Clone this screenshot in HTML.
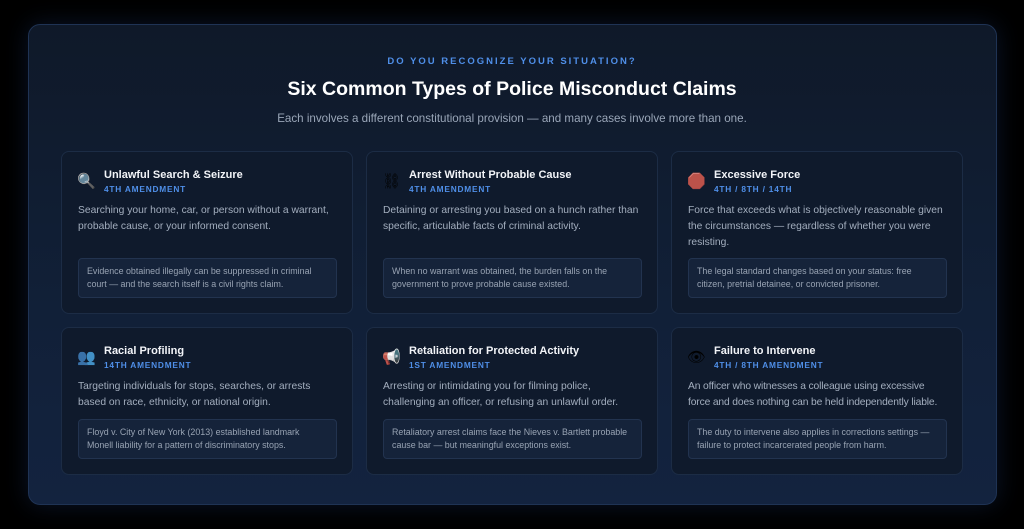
<!DOCTYPE html><html><head><meta charset="utf-8"><style>
*{box-sizing:border-box;margin:0;padding:0}
body{width:1024px;height:529px;background:#000;font-family:"Liberation Sans",sans-serif;overflow:hidden;position:relative}
.panel{position:absolute;left:28px;top:24px;width:969px;height:481px;border:1px solid #1f3354;border-radius:12px;background:linear-gradient(180deg,#0f1929 0%,#112038 60%,#13233f 100%);box-shadow:0 0 24px rgba(40,80,160,0.25)}
.eyebrow{position:absolute;top:56px;left:0;width:1024px;text-align:center;color:#4f8fe8;font-size:9.5px;font-weight:bold;letter-spacing:2px}
h1{position:absolute;top:78px;left:0;width:1024px;text-align:center;color:#fff;font-size:19.5px;font-weight:bold}
.sub{position:absolute;top:112px;left:0;width:1024px;text-align:center;color:#9aa6b8;font-size:11.6px}
.card{position:absolute;width:292px;background:#0f1a2c;border:1px solid #1c2c45;border-radius:8px}
.ic{position:absolute;left:15px;top:20px;font-size:15px;filter:saturate(0.6)}
.t{position:absolute;left:42px;top:17px;color:#f2f4f8;font-size:11px;font-weight:bold}
.a{position:absolute;left:42px;top:32px;color:#4f8fe8;font-size:8.3px;font-weight:bold;letter-spacing:.8px}
.d{position:absolute;left:16px;top:51px;width:256px;color:#a3aebe;font-size:10.3px;line-height:16px}
.n{position:absolute;left:16px;width:259px;height:40px;background:#15233a;border:1px solid #22334f;border-radius:4px;color:#98a3b3;font-size:8.9px;line-height:13px;padding:6px 8px}
</style></head><body>
<div class="panel"></div>
<div class="eyebrow">DO YOU RECOGNIZE YOUR SITUATION?</div>
<h1>Six Common Types of Police Misconduct Claims</h1>
<div class="sub">Each involves a different constitutional provision — and many cases involve more than one.</div>

<div class="card" style="left:61px;top:151px;height:163px"><div class="ic">🔍</div><div class="t">Unlawful Search &amp; Seizure</div><div class="a">4TH AMENDMENT</div><div class="d">Searching your home, car, or person without a warrant, probable cause, or your informed consent.</div><div class="n" style="top:106px">Evidence obtained illegally can be suppressed in criminal court — and the search itself is a civil rights claim.</div></div>
<div class="card" style="left:366px;top:151px;height:163px"><div class="ic">⛓</div><div class="t">Arrest Without Probable Cause</div><div class="a">4TH AMENDMENT</div><div class="d">Detaining or arresting you based on a hunch rather than specific, articulable facts of criminal activity.</div><div class="n" style="top:106px">When no warrant was obtained, the burden falls on the government to prove probable cause existed.</div></div>
<div class="card" style="left:671px;top:151px;height:163px"><div class="ic">🛑</div><div class="t">Excessive Force</div><div class="a">4TH / 8TH / 14TH</div><div class="d" style="width:266px">Force that exceeds what is objectively reasonable given the circumstances — regardless of whether you were resisting.</div><div class="n" style="top:106px">The legal standard changes based on your status: free citizen, pretrial detainee, or convicted prisoner.</div></div>

<div class="card" style="left:61px;top:327px;height:148px"><div class="ic">👥</div><div class="t">Racial Profiling</div><div class="a">14TH AMENDMENT</div><div class="d">Targeting individuals for stops, searches, or arrests based on race, ethnicity, or national origin.</div><div class="n" style="top:91px">Floyd v. City of New York (2013) established landmark Monell liability for a pattern of discriminatory stops.</div></div>
<div class="card" style="left:366px;top:327px;height:148px"><div class="ic">📢</div><div class="t">Retaliation for Protected Activity</div><div class="a">1ST AMENDMENT</div><div class="d">Arresting or intimidating you for filming police, challenging an officer, or refusing an unlawful order.</div><div class="n" style="top:91px">Retaliatory arrest claims face the Nieves v. Bartlett probable cause bar — but meaningful exceptions exist.</div></div>
<div class="card" style="left:671px;top:327px;height:148px"><div class="ic">👁</div><div class="t">Failure to Intervene</div><div class="a">4TH / 8TH AMENDMENT</div><div class="d" style="width:270px;letter-spacing:-0.15px">An officer who witnesses a colleague using excessive<br>force and does nothing can be held independently liable.</div><div class="n" style="top:91px">The duty to intervene also applies in corrections settings — failure to protect incarcerated people from harm.</div></div>
</body></html>
